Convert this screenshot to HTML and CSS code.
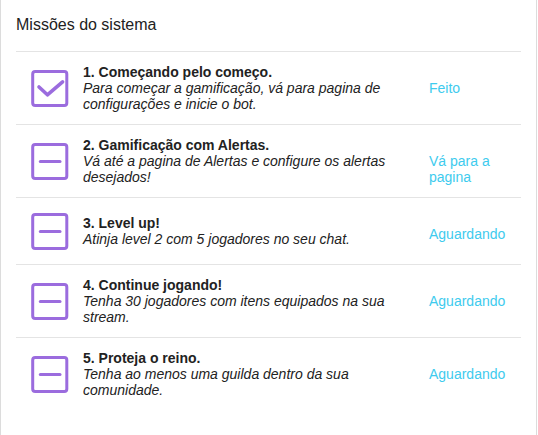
FILE: index.html
```html
<!DOCTYPE html>
<html lang="pt">
<head>
<meta charset="utf-8">
<title>Missões do sistema</title>
<link rel="stylesheet" href="styles.css">
</head>
<body>
<div class="card">
  <div class="card-title">Missões do sistema</div>
  <div class="missions">
    <div class="mission">
      <div class="mission-icon">
        <svg width="44" height="42" viewBox="0 0 44 42"><rect x="4.7" y="4.5" width="34.1" height="34" rx="2.5" fill="none" stroke="#9b6cde" stroke-width="3"/><polyline points="11,20 19.4,27.8 34.6,14.8" fill="none" stroke="#9b6cde" stroke-width="3.6" stroke-linecap="round" stroke-linejoin="round"/></svg>
      </div>
      <div class="mission-text">
        <div class="mission-name">1. Começando pelo começo.</div>
        <div class="mission-desc">Para começar a gamificação, vá para pagina de configurações e inicie o bot.</div>
      </div>
      <div class="mission-status">Feito</div>
    </div>
    <div class="mission">
      <div class="mission-icon">
        <svg width="44" height="42" viewBox="0 0 44 42"><rect x="4.7" y="4.5" width="34.1" height="34" rx="2.5" fill="none" stroke="#9b6cde" stroke-width="3"/><line x1="12.3" y1="21.5" x2="32" y2="21.5" stroke="#9b6cde" stroke-width="3" stroke-linecap="round"/></svg>
      </div>
      <div class="mission-text">
        <div class="mission-name">2. Gamificação com Alertas.</div>
        <div class="mission-desc">Vá até a pagina de Alertas e configure os alertas desejados!</div>
      </div>
      <div class="mission-status">Vá para a pagina</div>
    </div>
    <div class="mission">
      <div class="mission-icon">
        <svg width="44" height="42" viewBox="0 0 44 42"><rect x="4.7" y="4.5" width="34.1" height="34" rx="2.5" fill="none" stroke="#9b6cde" stroke-width="3"/><line x1="12.3" y1="21.5" x2="32" y2="21.5" stroke="#9b6cde" stroke-width="3" stroke-linecap="round"/></svg>
      </div>
      <div class="mission-text">
        <div class="mission-name">3. Level up!</div>
        <div class="mission-desc">Atinja level 2 com 5 jogadores no seu chat.</div>
      </div>
      <div class="mission-status">Aguardando</div>
    </div>
    <div class="mission">
      <div class="mission-icon">
        <svg width="44" height="42" viewBox="0 0 44 42"><rect x="4.7" y="4.5" width="34.1" height="34" rx="2.5" fill="none" stroke="#9b6cde" stroke-width="3"/><line x1="12.3" y1="21.5" x2="32" y2="21.5" stroke="#9b6cde" stroke-width="3" stroke-linecap="round"/></svg>
      </div>
      <div class="mission-text">
        <div class="mission-name">4. Continue jogando!</div>
        <div class="mission-desc">Tenha 30 jogadores com itens equipados na sua stream.</div>
      </div>
      <div class="mission-status">Aguardando</div>
    </div>
    <div class="mission">
      <div class="mission-icon">
        <svg width="44" height="42" viewBox="0 0 44 42"><rect x="4.7" y="4.5" width="34.1" height="34" rx="2.5" fill="none" stroke="#9b6cde" stroke-width="3"/><line x1="12.3" y1="21.5" x2="32" y2="21.5" stroke="#9b6cde" stroke-width="3" stroke-linecap="round"/></svg>
      </div>
      <div class="mission-text">
        <div class="mission-name">5. Proteja o reino.</div>
        <div class="mission-desc">Tenha ao menos uma guilda dentro da sua comunidade.</div>
      </div>
      <div class="mission-status">Aguardando</div>
    </div>
  </div>
</div>
</body>
</html>
```

FILE: styles.css
```css
html, body {
  margin: 0;
  padding: 0;
  background: #fff;
}
body {
  font-family: "Liberation Sans", Arial, sans-serif;
  color: #222;
  width: 538px;
}
.card {
  width: 537px;
  box-sizing: border-box;
  border-left: 1px solid #dcdcdc;
  border-right: 1px solid #dcdcdc;
  padding: 0 15px 60px 15px;
}
.card-title {
  font-size: 16px;
  line-height: 18px;
  padding: 16px 0 17px 0;
  color: #222;
}
.mission {
  display: grid;
  grid-template-columns: 67px 1fr 92px;
  align-items: center;
  border-top: 1px solid #e4e4e4;
  padding: 12px 0;
  font-size: 14px;
  line-height: 16px;
}
.mission-icon {
  padding-left: 12px;
  height: 42px;
}
.mission-icon svg {
  display: block;
}
.mission-text {
  padding-right: 14px;
}
.mission-name {
  font-weight: bold;
}
.mission-desc {
  font-style: italic;
}
.mission-status {
  align-self: start;
  margin-top: 16px;
  color: #3ecbee;
}
```
